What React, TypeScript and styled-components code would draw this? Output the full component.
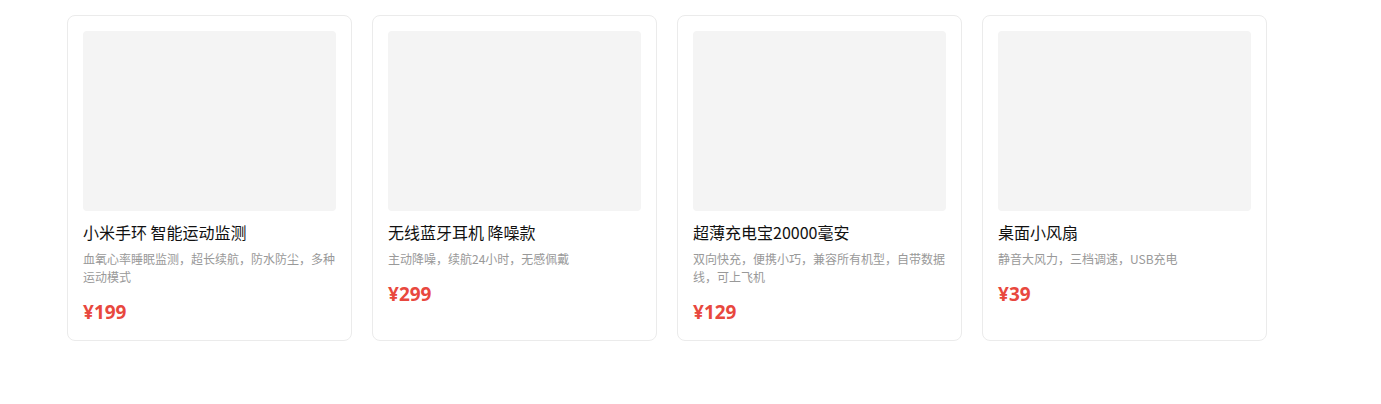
import styled, { createGlobalStyle } from "styled-components";

const GlobalStyle = createGlobalStyle`
  body {
    margin: 0;
    background: #fff;
    font-family: "Noto Sans", "Noto Sans CJK SC", sans-serif;
  }
`;

const Grid = styled.div`
  display: grid;
  grid-template-columns: repeat(4, 285px);
  gap: 20px;
  padding: 15px 0 0 67px;
`;

const Card = styled.div`
  display: flex;
  flex-direction: column;
  border: 1px solid #ebebeb;
  border-radius: 8px;
  padding: 15px;
  background: #fff;
`;

const Thumb = styled.div`
  height: 180px;
  background: #f4f4f4;
  border-radius: 4px;
`;

const Title = styled.h3`
  margin: 10px 0 0;
  font-size: 16px;
  font-weight: 400;
  line-height: 22px;
  color: #111;
  font-family: "Noto Sans CJK SC", sans-serif;
`;

const Desc = styled.p`
  margin: 7px 0 0;
  font-size: 12px;
  line-height: 18px;
  color: #999;
  font-family: "Noto Sans CJK SC", sans-serif;
`;

const Price = styled.div`
  margin-top: 13px;
  font-size: 19px;
  font-weight: 700;
  line-height: 26px;
  color: #e8483e;
  font-family: "Noto Sans", "Noto Sans CJK SC", sans-serif;
`;

const products = [
  { name: "小米手环 智能运动监测", desc: "血氧心率睡眠监测，超长续航，防水防尘，多种运动模式", price: 199 },
  { name: "无线蓝牙耳机 降噪款", desc: "主动降噪，续航24小时，无感佩戴", price: 299 },
  { name: "超薄充电宝20000毫安", desc: "双向快充，便携小巧，兼容所有机型，自带数据线，可上飞机", price: 129 },
  { name: "桌面小风扇", desc: "静音大风力，三档调速，USB充电", price: 39 },
];

export default function App() {
  return (
    <>
      <GlobalStyle />
      <Grid>
        {products.map((p) => (
          <Card key={p.name}>
            <Thumb />
            <Title>{p.name}</Title>
            <Desc>{p.desc}</Desc>
            <Price>¥{p.price}</Price>
          </Card>
        ))}
      </Grid>
    </>
  );
}
